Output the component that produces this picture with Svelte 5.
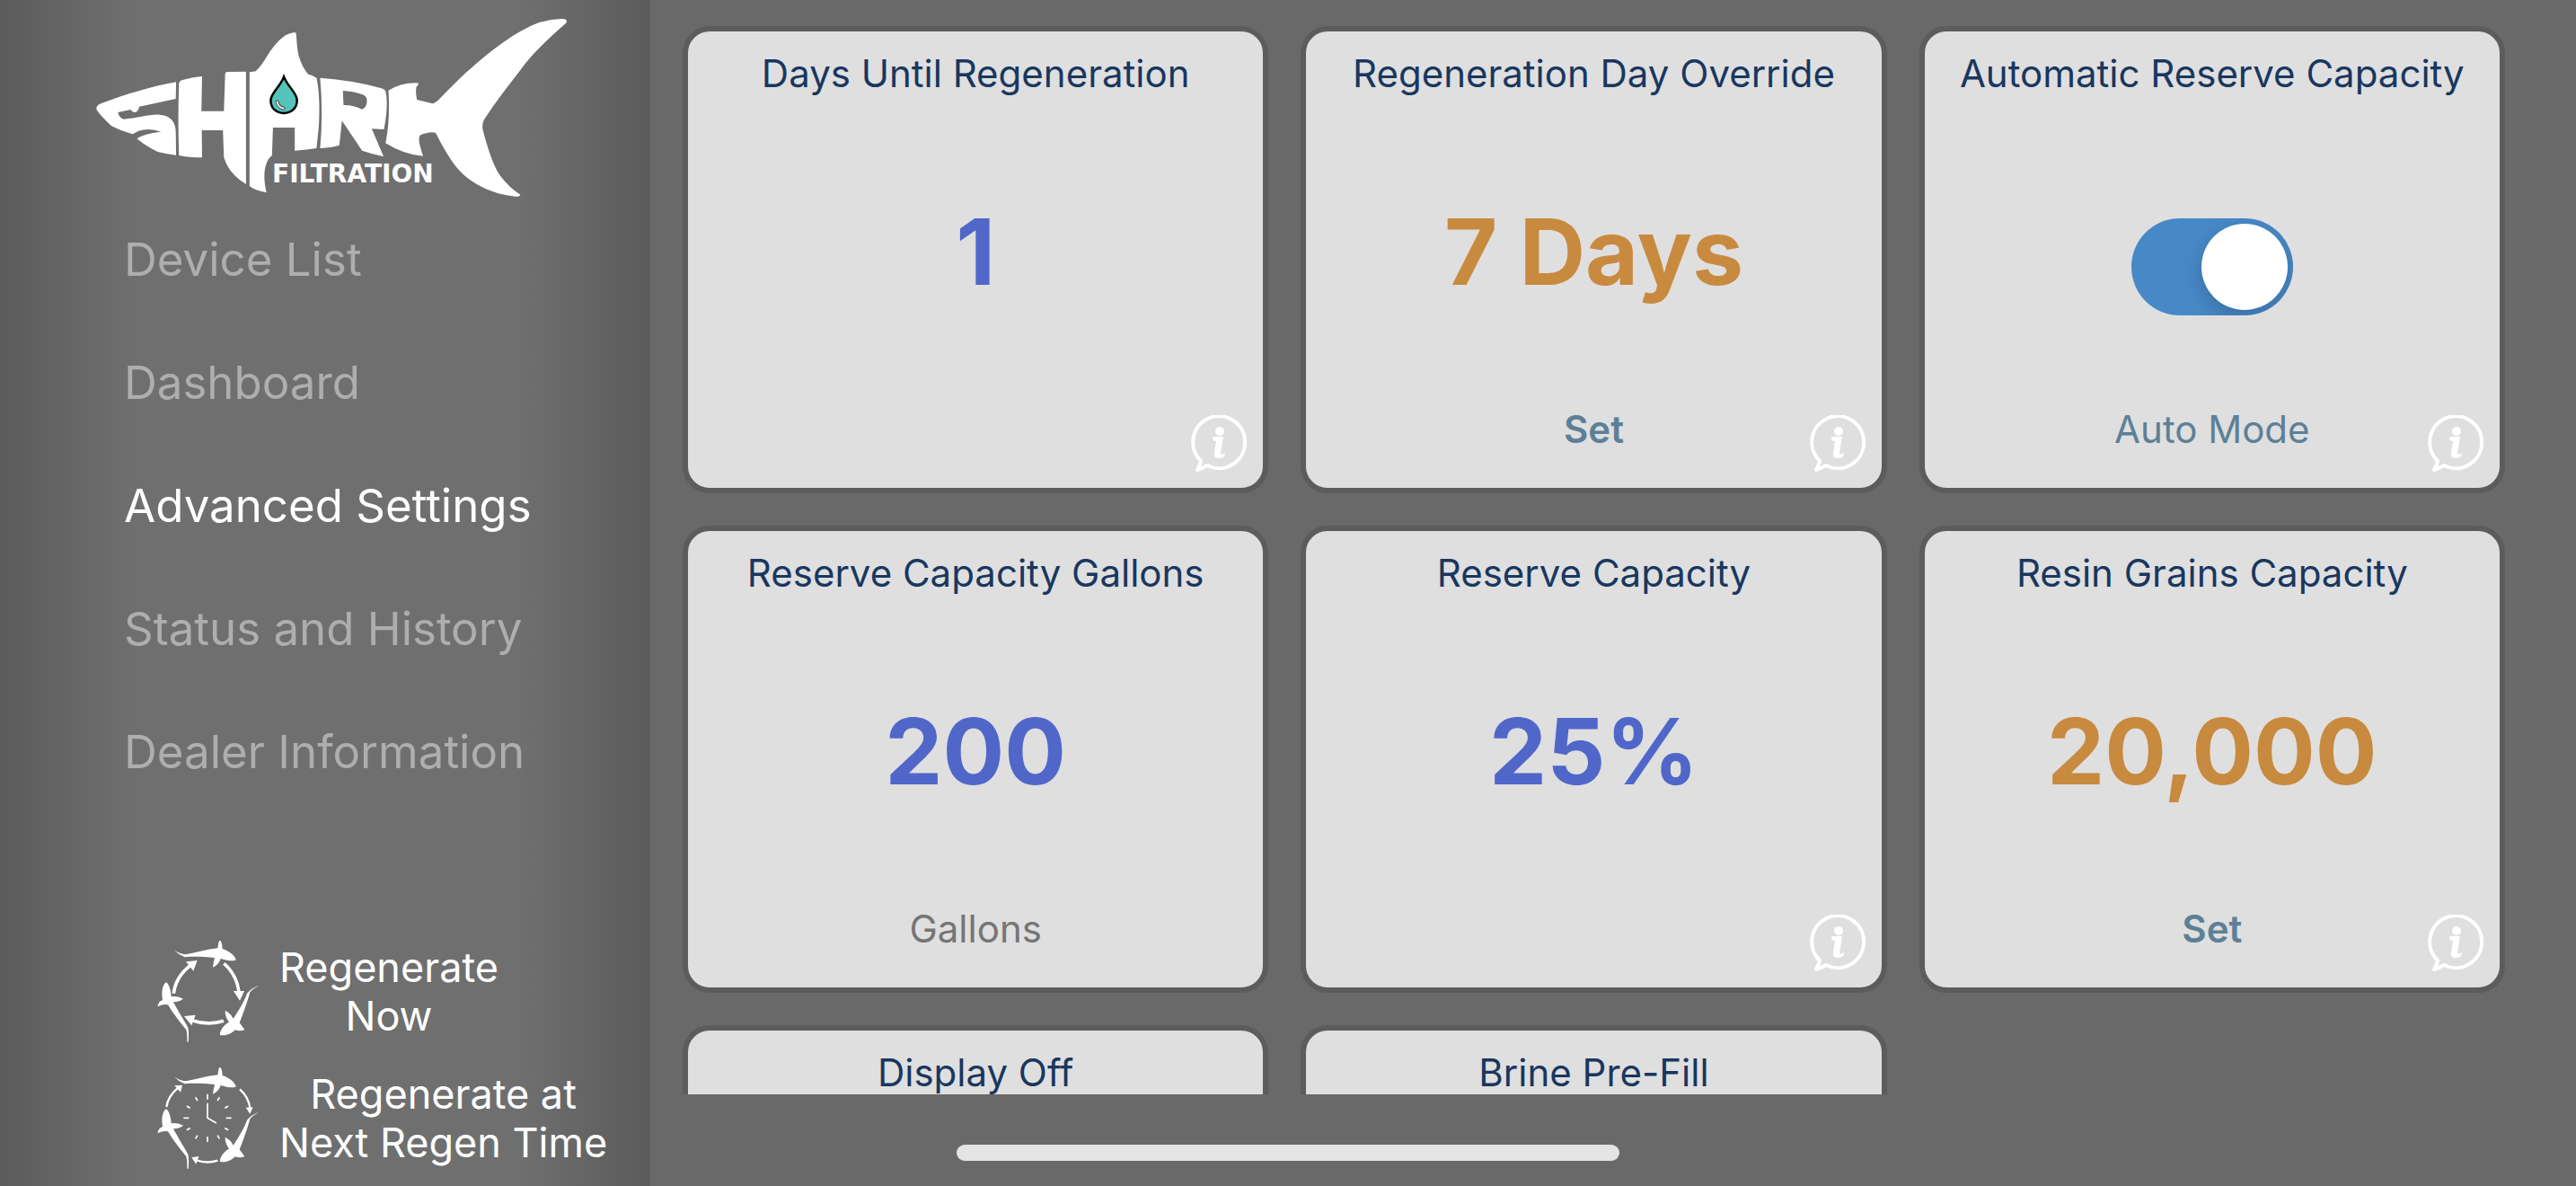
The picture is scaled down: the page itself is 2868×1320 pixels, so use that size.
<script>
    const navItems = [
        "Device List",
        "Dashboard",
        "Advanced Settings",
        "Status and History",
        "Dealer Information",
    ];

    const cards = [
        { title: "Days Until Regeneration", value: "1", info: true },
        {
            title: "Regeneration Day Override",
            value: "7 Days",
            editable: true,
            info: true,
        },
        { title: "Automatic Reserve Capacity", toggle: true, info: true },
        { title: "Reserve Capacity Gallons", value: "200", unit: "Gallons" },
        { title: "Reserve Capacity", value: "25%", info: true },
        {
            title: "Resin Grains Capacity",
            value: "20,000",
            editable: true,
            info: true,
        },
        { title: "Display Off", value: "" },
        { title: "Brine Pre-Fill", value: "" },
    ];

    // hour marks around the clock, the quarter hours are a bit longer
    const ticks = Array.from({ length: 12 }, (_, i) => ({
        angle: i * 30,
        length: i % 3 === 0 ? 18 : 13,
    }));

    let currentPage = $state("Advanced Settings");
    let autoMode = $state(true);
</script>

{#snippet sharks()}
    <path
        d="M86 69Q105 82 125 84C160 78 195 66 232 63L236 40Q241 35 244 42Q248 54 248 65C270 72 290 88 293 102C288 107 270 106 242 98Q236 118 216 127Q218 108 222 95C190 92 150 90 122 93Q100 84 86 69Z"
    />
    <path
        d="M60 177C68 182 76 200 77 225Q100 222 117 232Q105 242 84 243C98 270 122 308 133 328Q137 345 134 376L130 376Q131 350 127 335C108 312 82 280 66 252Q50 248 32 258Q32 242 48 236C44 215 46 185 60 177Z"
    />
    <path
        d="M370 187Q350 198 340 210C332 240 318 280 305 312Q312 322 322 335Q308 342 290 336C275 352 255 356 240 353C238 340 252 318 270 310Q256 292 257 271Q276 280 284 298C300 275 322 238 330 214Q345 196 370 187Z"
    />
{/snippet}

<div class="app">
    <aside class="sidebar">
        <svg class="logo" viewBox="0 0 560 220" role="img" aria-label="Shark Filtration">
            <g transform="scale(0.3571 0.3333)">
                <path
                    d="M62 346C140 315 220 288 297 274L296 330L182 356Q180 374 167 375Q158 373 156 366L116 375Q118 392 134 398C175 395 215 381 245 383Q294 386 296 440L297 518Q265 514 240 507Q205 490 175 463Q195 446 250 440Q215 426 180 437Q168 443 162 448Q120 435 95 420Q65 390 50 368Q44 354 62 346Z"
                />
                <path
                    d="M306 278Q308 268 320 266Q350 257 378 255L376 371L446 371L450 246Q450 241 456 240L515 239L515 615Q460 580 446 525L443 435L377 435L378 526Q335 526 306 519Q302 400 306 278Z"
                />
                <path
                    d="M526 241L545 238Q560 225 585 180C620 125 645 108 670 109C673 115 672 150 679 185Q690 225 709 248Q720 250 735 260Q747 320 742 420L735 495Q705 500 667 503L667 426L599 426L596 520C575 535 565 580 579 643Q545 637 526 622Z"
                />
                <path
                    fill-rule="evenodd"
                    d="M746 260Q850 268 935 294Q948 298 950 305Q960 350 945 432L907 430L944 523Q910 515 877 503L814 403L806 485Q780 493 746 495Q756 380 746 260ZM817 303L819 351Q850 350 877 365Q892 360 892 335Q892 320 876 315Q850 305 817 303Z"
                />
                <path
                    d="M959 302Q1000 275 1050 277Q1056 280 1046 290Q1043 310 1048 333Q1070 338 1097 346Q1105 344 1115 334C1200 235 1310 140 1370 105Q1440 60 1505 63Q1520 66 1512 78C1440 145 1400 190 1370 235C1330 290 1290 345 1257 400Q1248 420 1256 445C1270 500 1290 565 1310 590Q1335 625 1370 650Q1370 656 1355 656C1280 650 1220 610 1190 580C1160 550 1130 495 1107 445Q1095 437 1060 450Q1050 456 1058 490L1067 521Q1010 518 950 478Q965 400 959 302Z"
                />
                <path
                    class="drop"
                    d="M633 256C645 290 674 310 674 335C674 362 655 378 633 378C610 378 592 362 592 335C592 310 622 290 633 256Z"
                />
                <path class="shine-edge" d="M612 340Q615 358 632 362" />
                <path class="shine" d="M612 340Q615 358 632 362" />
            </g>
            <text x="213" y="203">FILTRATION</text>
        </svg>

        <nav>
            {#each navItems as item}
                <a
                    href="#{item.toLowerCase().replaceAll(' ', '-')}"
                    class:active={currentPage === item}
                    onclick={() => (currentPage = item)}
                >
                    {item}
                </a>
            {/each}
        </nav>

        <div class="actions">
            <button>
                <svg viewBox="30 38 342 342" aria-hidden="true">
                    {@render sharks()}
                    <g class="arrows thick">
                        <path d="M85 214Q92 158 142 120" />
                        <path d="M253 114Q295 150 303 208" />
                        <path d="M252 306Q200 322 146 304" />
                    </g>
                    <path d="M164 104L126 108L151 139Z" />
                    <path d="M285 206L321 206L306 238Z" />
                    <path d="M120 290L158 286L145 321Z" />
                </svg>
                <span>Regenerate<br />Now</span>
            </button>
            <button>
                <svg viewBox="30 38 342 342" aria-hidden="true">
                    {@render sharks()}
                    <g class="arrows">
                        <path d="M61 170Q66 134 100 106" />
                        <path d="M306 111Q335 136 340 174" />
                        <path d="M232 349Q195 361 158 347" />
                    </g>
                    <path d="M114 97L88 99L108 121Z" />
                    <path d="M326 172L350 171L340 193Z" />
                    <path d="M145 339L169 335L160 361Z" />
                    <g class="clock">
                        {#each ticks as tick}
                            <path
                                d="M198 127V{127 + tick.length}"
                                transform="rotate({tick.angle} 198 207)"
                            />
                        {/each}
                        <path d="M198 157V207L228 224" />
                    </g>
                </svg>
                <span>Regenerate at<br />Next Regen Time</span>
            </button>
        </div>
    </aside>

    <main>
        <div class="grid">
            {#each cards as card}
                <section class="card">
                    <h2>{card.title}</h2>
                    <div class="body">
                        {#if card.toggle}
                            <input
                                id="auto-mode"
                                type="checkbox"
                                role="switch"
                                bind:checked={autoMode}
                            />
                        {:else}
                            <span class="value" class:editable={card.editable}>
                                {card.value}
                            </span>
                        {/if}
                    </div>
                    <div class="footer">
                        {#if card.toggle}
                            <label for="auto-mode">Auto Mode</label>
                        {:else if card.editable}
                            <button class="set">Set</button>
                        {:else if card.unit}
                            <span class="unit">{card.unit}</span>
                        {/if}
                    </div>
                    {#if card.info}
                        <button class="info" aria-label="About {card.title}">
                            <svg viewBox="0 0 62 64" aria-hidden="true">
                                <path
                                    class="bubble"
                                    d="M11 51A29 29 0 1 1 18 56Q13 59 7 61Q10 56 11 51Z"
                                />
                                <circle cx="32" cy="18" r="5" />
                                <path
                                    d="M24 26Q24 24 27 24H36L33 42Q33 45 38 42Q38 48 31 48Q25 48 26 42L28 29Q24 29 24 26Z"
                                />
                            </svg>
                        </button>
                    {/if}
                </section>
            {/each}
        </div>
    </main>

    <div class="home-bar"></div>
</div>

<style>
    :global(body) {
        margin: 0;
        background: #696969;
    }

    .app {
        display: flex;
        height: 100vh;
        font-family: Inter, "Liberation Sans", sans-serif;
        background: #696969;
        overflow: hidden;
    }

    button {
        padding: 0;
        border: none;
        background: none;
        font: inherit;
        color: inherit;
        cursor: pointer;
    }

    .sidebar {
        display: flex;
        flex-direction: column;
        flex: none;
        box-sizing: border-box;
        width: 724px;
        padding-bottom: 18px;
        background: linear-gradient(
            to right,
            #5b5b5b,
            #666666 80px,
            #6f6f6f 150px,
            #6f6f6f 580px,
            #666666 644px,
            #5b5b5b
        );
        color: #ffffff;
    }

    .logo {
        width: 560px;
        height: 220px;
        margin-left: 90px;
        fill: #ffffff;
    }

    .logo text {
        font-family: "DejaVu Sans", sans-serif;
        font-size: 28px;
        font-weight: bold;
    }

    .drop {
        fill: #54c4ba;
        stroke: #000000;
        stroke-width: 7;
    }

    .shine-edge,
    .shine {
        fill: none;
        stroke: #222222;
        stroke-width: 11;
        stroke-linecap: round;
    }

    .shine {
        stroke: #dddddd;
        stroke-width: 7;
    }

    nav {
        display: flex;
        flex-direction: column;
    }

    nav a {
        padding-left: 138px;
        font-size: 51px;
        line-height: 137px;
        color: #aeaeae;
        text-decoration: none;
    }

    nav a.active {
        color: #ffffff;
    }

    .actions {
        display: flex;
        flex-direction: column;
        align-items: flex-start;
        gap: 27px;
        margin-top: auto;
        padding-left: 175px;
    }

    .actions button {
        display: flex;
        align-items: center;
        gap: 22px;
        font-size: 45px;
        line-height: 54px;
        text-align: center;
    }

    .actions svg {
        width: 114px;
        height: 114px;
        fill: #ffffff;
    }

    .arrows,
    .clock {
        fill: none;
        stroke: #ffffff;
        stroke-width: 7;
    }

    .arrows.thick {
        stroke-width: 11;
    }

    .clock {
        stroke-width: 5;
    }

    main {
        flex: 1;
        margin-bottom: 102px;
        padding: 29px 79px 0 36px;
        overflow-y: auto;
        scrollbar-width: none;
    }

    .grid {
        display: grid;
        grid-template-columns: repeat(3, 1fr);
        grid-auto-rows: 520px;
        gap: 36px;
    }

    .card {
        position: relative;
        display: flex;
        flex-direction: column;
        box-sizing: border-box;
        padding: 22px 20px 40px;
        border: 6px solid #5c5c5c;
        border-radius: 30px;
        background: #dfdfdf;
        text-align: center;
    }

    h2 {
        margin: 0;
        font-size: 42px;
        font-weight: 400;
        line-height: 50px;
        color: #19375f;
        white-space: nowrap;
    }

    .body {
        display: flex;
        flex: 1;
        align-items: center;
        justify-content: center;
    }

    .value {
        font-size: 102px;
        font-weight: 700;
        color: #5067c9;
    }

    .value.editable {
        color: #c88a3e;
    }

    .body input {
        appearance: none;
        box-sizing: border-box;
        width: 180px;
        height: 108px;
        margin: 34px 0 0;
        padding: 6px;
        border-radius: 54px;
        background: #b4b4b4;
        overflow: hidden;
        cursor: pointer;
    }

    .body input::before {
        content: "";
        display: block;
        width: 96px;
        height: 96px;
        border-radius: 50%;
        background: #ffffff;
        box-shadow: 0 8px 24px rgba(0, 0, 0, 0.2);
    }

    .body input:checked {
        background: #4789c7;
    }

    .body input:checked::before {
        margin-left: auto;
    }

    .footer {
        height: 50px;
        font-size: 42px;
        line-height: 50px;
        color: #5d8097;
    }

    .set {
        font-weight: 600;
    }

    .unit {
        color: #757575;
    }

    .info {
        position: absolute;
        right: 18px;
        bottom: 17px;
        width: 62px;
        height: 64px;
    }

    .info svg {
        display: block;
        fill: #ffffff;
    }

    .bubble {
        fill: none;
        stroke: #ffffff;
        stroke-width: 4;
        stroke-linejoin: round;
    }

    .home-bar {
        position: fixed;
        bottom: 28px;
        left: 50%;
        width: 738px;
        height: 18px;
        border-radius: 9px;
        background: #e4e4e4;
        transform: translateX(-50%);
    }
</style>
